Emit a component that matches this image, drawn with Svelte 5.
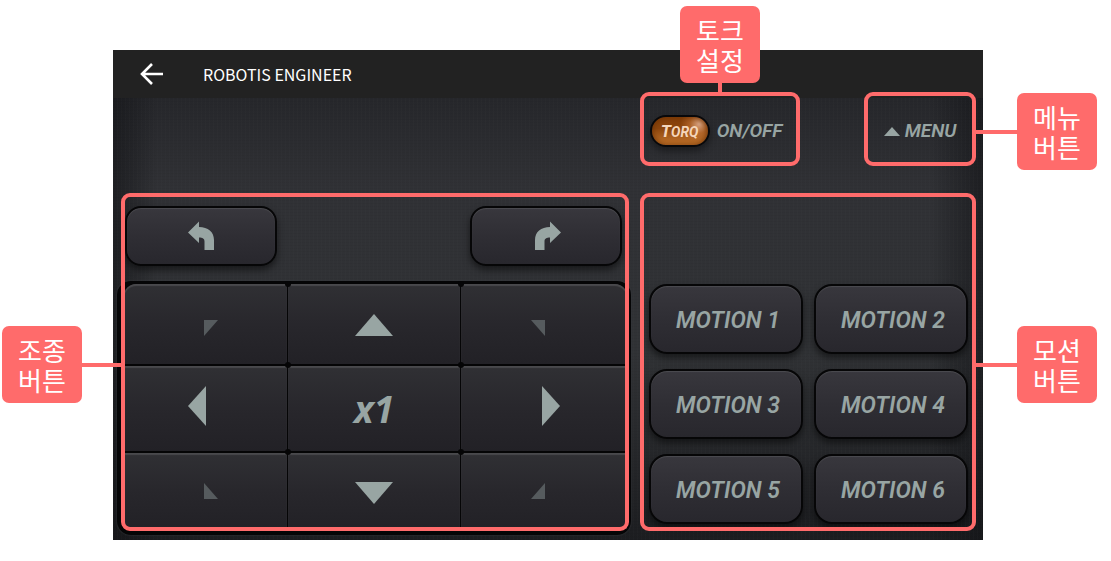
<script>
  const pad = [
    { label: 'Forward left', shape: '18,16 32,16 18,32', dim: true },
    { label: 'Forward', shape: '20,10 39,32 1,32' },
    { label: 'Forward right', shape: '7,16 21,16 21,32', dim: true },
    { label: 'Left', shape: '2,17 20,-3 20,37' },
    { label: 'Speed', text: 'x1' },
    { label: 'Right', shape: '18,-3 36,17 18,37' },
    { label: 'Backward left', shape: '18,12 32,28 18,28', dim: true },
    { label: 'Backward', shape: '1,11 39,11 20,33' },
    { label: 'Backward right', shape: '21,12 21,28 7,28', dim: true }
  ];
  const motions = [1, 2, 3, 4, 5, 6];
</script>

{#snippet callout(first, second, side)}
  <div class="frame">
    <p class="callout {side}">{first}<br />{second}</p>
  </div>
{/snippet}

<main class="stage">
  <section class="device">
    <header class="appbar">
      <button class="back" aria-label="Back">
        <svg viewBox="0 0 24 24" width="24" height="24" fill="none" stroke="#fff" stroke-width="2.6">
          <path d="M13 2 3 12l10 10M3 12H24" />
        </svg>
      </button>
      <h1>ROBOTIS ENGINEER</h1>
    </header>

    <div class="body">
      <div class="toolbar">
        <div class="torq">
          <button class="pill" aria-label="Torq on/off"><span class="big">T</span>ORQ</button>
          <span class="word">ON/OFF</span>
          {@render callout('토크', '설정', 'above')}
        </div>
        <div class="menu">
          <button class="word menu-button">
            <svg viewBox="0 0 16 9" width="16" height="9"><polygon points="8,0 16,9 0,9" fill="#98a5a3" /></svg>
            MENU
          </button>
          {@render callout('메뉴', '버튼', 'right')}
        </div>
      </div>

      <div class="drive">
        <div class="turns">
          <button class="key turn" aria-label="Turn left">
            <svg viewBox="0 0 28 30" width="28" height="30">
              <path d="M1 11.500 12 0.500V6C21 6 27 11 27 19v10h-9.500v-8.500c0-3-2-4-5.500-4V22Z" fill="#98a5a3" />
            </svg>
          </button>
          <button class="key turn" aria-label="Turn right">
            <svg viewBox="-3 0 31 30" width="31" height="30">
              <path d="M27 11.500 16 0.500V6C7 6 1 11 1 19v10h9.500v-8.500c0-3 2-4 5.500-4V22Z" fill="#98a5a3" />
            </svg>
          </button>
        </div>
        <div class="pad">
          {#each pad as cell}
            <button class="cell" aria-label={cell.label}>
              {#if cell.text}
                {cell.text}
              {:else}
                <svg viewBox="0 0 40 40" width="40" height="40">
                  <polygon points={cell.shape} fill={cell.dim ? '#565b5e' : '#98a5a3'} />
                </svg>
              {/if}
            </button>
          {/each}
          <svg class="joints" viewBox="0 0 503 245" preserveAspectRatio="none" aria-hidden="true">
            {#each [163, 336] as x}
              {#each [0, 81, 168] as y}
                <circle cx={x + 1} cy={y} r="3" fill="#050506" />
              {/each}
            {/each}
          </svg>
        </div>
        {@render callout('조종', '버튼', 'left')}
      </div>

      <div class="motions">
        {#each motions as n}
          <button class="key motion">MOTION {n}</button>
        {/each}
        {@render callout('모션', '버튼', 'right')}
      </div>
    </div>
  </section>
</main>

<style>
  :global(body) {
    background: #fff;
  }

  .stage {
    padding: 50px 128px 21px 113px;
    font-family: 'Noto Sans CJK KR', sans-serif;
  }

  button {
    margin: 0;
    padding: 0;
    border: 0;
    background: none;
    color: #98a5a3;
    font-family: Roboto, sans-serif;
    font-style: italic;
    font-weight: 700;
    cursor: pointer;
  }

  svg {
    display: block;
    overflow: visible;
  }

  .device {
    background:
      repeating-linear-gradient(90deg, rgba(255, 255, 255, 0.01) 0 1px, transparent 1px 4px),
      repeating-linear-gradient(0deg, rgba(0, 0, 0, 0.03) 0 1px, transparent 1px 3px),
      linear-gradient(90deg, rgba(18, 19, 22, 0.6), transparent 5% 94%, rgba(18, 19, 22, 0.6)),
      linear-gradient(#26272b 10%, #303135 28%, #303235 62%, #1c1d20);
  }

  .appbar {
    display: flex;
    align-items: center;
    gap: 40px;
    height: 48px;
    padding-left: 26px;
    background: #222;
  }

  h1 {
    margin: 0;
    color: #fff;
    font-size: 16px;
    font-weight: 400;
    line-height: 24px;
  }

  .body {
    display: grid;
    grid-template-columns: 508fr 336fr;
    gap: 27px 11px;
    margin-top: -6px;
    padding: 0 7px 9px 8px;
  }

  .toolbar {
    grid-column: 2;
    display: flex;
    justify-content: space-between;
    height: 74px;
  }

  .torq,
  .menu,
  .drive,
  .motions {
    position: relative;
  }

  .torq,
  .menu {
    display: flex;
    align-items: center;
    justify-content: center;
    gap: 7px;
    padding-top: 4px;
    box-sizing: border-box;
  }

  .torq {
    width: 160px;
    padding-right: 8px;
  }

  .menu {
    width: 112px;
  }

  .word {
    color: #98a5a3;
    font: italic 600 19px / 24px Roboto, sans-serif;
  }

  .menu-button {
    display: flex;
    align-items: center;
    gap: 5px;
  }

  .pill {
    width: 60px;
    height: 32px;
    border: 2px solid #08080a;
    border-radius: 16px;
    background:
      radial-gradient(circle at 84% 25%, #d9a585 0, rgba(205, 125, 65, 0.5) 18%, transparent 36%),
      linear-gradient(#864009, #8b450d 40%, #c7782e);
    box-shadow:
      inset 0 0 6px #6b3003,
      0 4px 7px rgba(0, 0, 0, 0.4);
    color: #f5d6bb;
    font-size: 14px;
    line-height: 28px;
  }

  .big {
    font-size: 17px;
  }

  .key {
    border: 2px solid #060607;
    background: linear-gradient(#38373d, #2f2e34 50%, #28272d);
    box-shadow:
      inset 0 1px 1px #4c4c50,
      0 4px 7px rgba(0, 0, 0, 0.5);
  }

  .drive {
    padding-top: 13px;
  }

  .turns {
    display: flex;
    justify-content: space-between;
    padding: 0 7px 0 4px;
  }

  .turn {
    display: flex;
    align-items: center;
    justify-content: center;
    width: 152px;
    height: 60px;
    border-radius: 16px;
  }

  .pad {
    position: relative;
    display: grid;
    grid-template-columns: 163fr 172fr 166fr;
    grid-template-rows: 80px 85px 76px;
    gap: 2px 1px;
    margin: 15px -2px -4px -4px;
    padding: 3px 4px 6px 7px;
    border-radius: 14px;
    background: #050506;
    box-shadow: 0 0 2px #3b3d40;
  }

  .cell {
    display: flex;
    align-items: center;
    justify-content: center;
    background: linear-gradient(#303034, #28272c 50%, #222126);
    box-shadow: inset 0 2px 1px #49494c;
    font: italic 700 37px / 40px 'Noto Sans', sans-serif;
  }

  .cell:first-child {
    border-top-left-radius: 12px;
  }

  .cell:nth-child(3) {
    border-top-right-radius: 12px;
  }

  .joints {
    position: absolute;
    inset: 3px 4px 6px 7px;
    width: calc(100% - 11px);
    height: calc(100% - 9px);
    pointer-events: none;
  }

  .motions {
    display: grid;
    grid-template-columns: 1fr 1fr;
    grid-auto-rows: 70px;
    gap: 15px 11px;
    padding: 91px 8px 7px 9px;
  }

  .motion {
    padding: 4px 0 0 4px;
    border-radius: 18px;
    font-size: 23px;
    font-weight: 600;
    line-height: 28px;
  }

  .frame {
    position: absolute;
    inset: 0;
    border: 4px solid #ff6b6b;
    border-radius: 9px;
    pointer-events: none;
  }

  .callout {
    position: absolute;
    box-sizing: border-box;
    width: 80px;
    height: 77px;
    margin: 0;
    padding-top: 9px;
    border-radius: 7px;
    background: #ff6b6b;
    color: #fff;
    font-size: 26px;
    line-height: 30px;
    text-align: center;
  }

  .callout::after {
    content: '';
    position: absolute;
    background: #ff6b6b;
  }

  .above {
    bottom: calc(100% + 13px);
    left: calc(50% - 40px);
  }

  .above::after {
    top: 100%;
    left: calc(50% - 2px);
    width: 4px;
    height: 10px;
  }

  .left,
  .right {
    top: calc(50% - 36px);
  }

  .left {
    right: calc(100% + 43px);
  }

  .right {
    left: calc(100% + 45px);
  }

  .left::after,
  .right::after {
    top: calc(50% - 2px);
    width: 42px;
    height: 4px;
  }

  .left::after {
    left: 100%;
  }

  .right::after {
    right: 100%;
  }
</style>
